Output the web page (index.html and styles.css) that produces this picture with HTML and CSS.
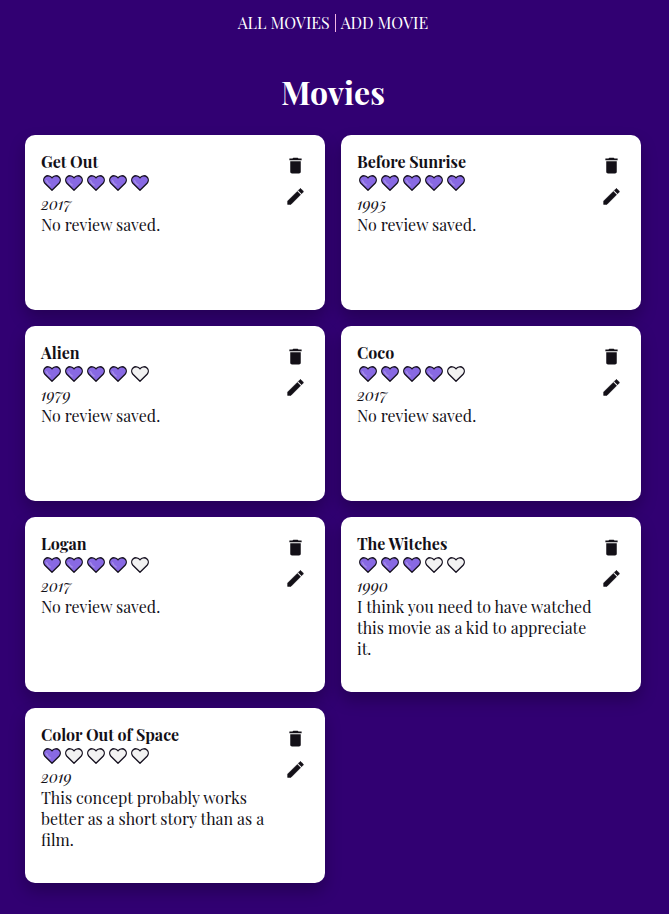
FILE: index.html
```html
<!DOCTYPE html>
<html lang="en">
<head>
<meta charset="utf-8">
<title>Movies</title>
<link rel="stylesheet" href="styles.css">
</head>
<body>
<svg class="sprite" aria-hidden="true">
  <defs>
  <symbol id="heart" viewBox="0 0 18 16">
    <path d="M9 15.3 1.9 8.2C.2 6.3.4 3.500 2 2 3.800.3 6.800.4 8.300 2.100L9 2.900 9.700 2.100C11.200.4 14.200.3 16 2 17.600 3.500 17.800 6.300 16.100 8.200Z" stroke="#15101f" stroke-width="1.3" stroke-linejoin="round"/>
    <path d="M3.300 5.200Q4.200 8.200 7.600 10.400" fill="none" stroke="#fff" stroke-opacity=".25" stroke-width="1.300"/>
  </symbol>
  <symbol id="trash" viewBox="0 0 24 24"><path d="M6 19c0 1.100.9 2 2 2h8c1.100 0 2-.9 2-2V7H6v12zM19 4h-3.500l-1-1h-5l-1 1H5v2h14V4z"/></symbol>
  <symbol id="pencil" viewBox="0 0 24 24"><path d="M3 17.250V21h3.750L17.810 9.940l-3.750-3.750L3 17.250zM20.710 7.040c.39-.39.39-1.020 0-1.410l-2.340-2.340c-.39-.39-1.020-.39-1.410 0l-1.830 1.830 3.750 3.750 1.830-1.830z" stroke="#131017" stroke-width=".6" stroke-linejoin="round"/></symbol>
  </defs>
</svg>
<nav class="nav"><a>ALL MOVIES</a><span class="divider"></span><a>ADD MOVIE</a></nav>
<h1>Movies</h1>
<main class="grid">
  <article class="card">
    <div class="info">
      <h2>Get Out</h2>
      <div class="hearts"><svg class="on"><use href="#heart"/></svg><svg class="on"><use href="#heart"/></svg><svg class="on"><use href="#heart"/></svg><svg class="on"><use href="#heart"/></svg><svg class="on"><use href="#heart"/></svg></div>
      <div class="year">2017</div>
      <p>No review saved.</p>
    </div>
    <div class="actions"><svg><use href="#trash"/></svg><svg><use href="#pencil"/></svg></div>
  </article>
  <article class="card">
    <div class="info">
      <h2>Before Sunrise</h2>
      <div class="hearts"><svg class="on"><use href="#heart"/></svg><svg class="on"><use href="#heart"/></svg><svg class="on"><use href="#heart"/></svg><svg class="on"><use href="#heart"/></svg><svg class="on"><use href="#heart"/></svg></div>
      <div class="year">1995</div>
      <p>No review saved.</p>
    </div>
    <div class="actions"><svg><use href="#trash"/></svg><svg><use href="#pencil"/></svg></div>
  </article>
  <article class="card">
    <div class="info">
      <h2>Alien</h2>
      <div class="hearts"><svg class="on"><use href="#heart"/></svg><svg class="on"><use href="#heart"/></svg><svg class="on"><use href="#heart"/></svg><svg class="on"><use href="#heart"/></svg><svg><use href="#heart"/></svg></div>
      <div class="year">1979</div>
      <p>No review saved.</p>
    </div>
    <div class="actions"><svg><use href="#trash"/></svg><svg><use href="#pencil"/></svg></div>
  </article>
  <article class="card">
    <div class="info">
      <h2>Coco</h2>
      <div class="hearts"><svg class="on"><use href="#heart"/></svg><svg class="on"><use href="#heart"/></svg><svg class="on"><use href="#heart"/></svg><svg class="on"><use href="#heart"/></svg><svg><use href="#heart"/></svg></div>
      <div class="year">2017</div>
      <p>No review saved.</p>
    </div>
    <div class="actions"><svg><use href="#trash"/></svg><svg><use href="#pencil"/></svg></div>
  </article>
  <article class="card">
    <div class="info">
      <h2>Logan</h2>
      <div class="hearts"><svg class="on"><use href="#heart"/></svg><svg class="on"><use href="#heart"/></svg><svg class="on"><use href="#heart"/></svg><svg class="on"><use href="#heart"/></svg><svg><use href="#heart"/></svg></div>
      <div class="year">2017</div>
      <p>No review saved.</p>
    </div>
    <div class="actions"><svg><use href="#trash"/></svg><svg><use href="#pencil"/></svg></div>
  </article>
  <article class="card">
    <div class="info">
      <h2>The Witches</h2>
      <div class="hearts"><svg class="on"><use href="#heart"/></svg><svg class="on"><use href="#heart"/></svg><svg class="on"><use href="#heart"/></svg><svg><use href="#heart"/></svg><svg><use href="#heart"/></svg></div>
      <div class="year">1990</div>
      <p>I think you need to have watched this movie as a kid to appreciate it.</p>
    </div>
    <div class="actions"><svg><use href="#trash"/></svg><svg><use href="#pencil"/></svg></div>
  </article>
  <article class="card">
    <div class="info">
      <h2>Color Out of Space</h2>
      <div class="hearts"><svg class="on"><use href="#heart"/></svg><svg><use href="#heart"/></svg><svg><use href="#heart"/></svg><svg><use href="#heart"/></svg><svg><use href="#heart"/></svg></div>
      <div class="year">2019</div>
      <p>This concept probably works better as a short story than as a film.</p>
    </div>
    <div class="actions"><svg><use href="#trash"/></svg><svg><use href="#pencil"/></svg></div>
  </article>
</main>
</body>
</html>
```
FILE: styles.css
```css
* { box-sizing: border-box; }
body {
  margin: 0;
  min-height: 914px;
  background: #310072;
  color: #131017;
  font-family: "Playfair Display", "Liberation Serif", serif;
  font-size: 16px;
  line-height: 21px;
}
.sprite { display: none; }
.nav {
  display: flex;
  align-items: flex-start;
  justify-content: center;
  width: 666px;
  padding-top: 12px;
  height: 33px;
  color: #fff;
  white-space: nowrap;
}
.divider { width: 1px; height: 18px; margin: 2px 5px 0; background: #f3b5e4; }
h1 {
  width: 666px;
  margin: 37px 0 0;
  height: 65px;
  color: #fff;
  font-size: 32px;
  line-height: 44px;
  text-align: center;
}
.grid {
  display: grid;
  grid-template-columns: 300px 300px;
  grid-auto-rows: 175px;
  gap: 16px;
  padding-left: 25px;
}
.card {
  display: flex;
  justify-content: space-between;
  padding: 16px 19.5px 0 16px;
  border-radius: 10px;
  background: #fff;
  box-shadow: 0 8px 16px rgba(0, 0, 0, .25);
}
.info { width: 238px; }
h2 { margin: 0; font-size: 16px; line-height: 21px; }
.hearts { display: flex; gap: 4px; height: 21px; padding: 3px 0 0 2px; }
.hearts svg { width: 18px; height: 16px; fill: #f2f2f2; }
.hearts .on { fill: #8869e3; }
.year { font-style: italic; }
p { margin: 0; }
.actions { display: flex; flex-direction: column; gap: 10px; padding-top: 3.5px; }
.actions svg { width: 21px; height: 21px; fill: #131017; }
```
